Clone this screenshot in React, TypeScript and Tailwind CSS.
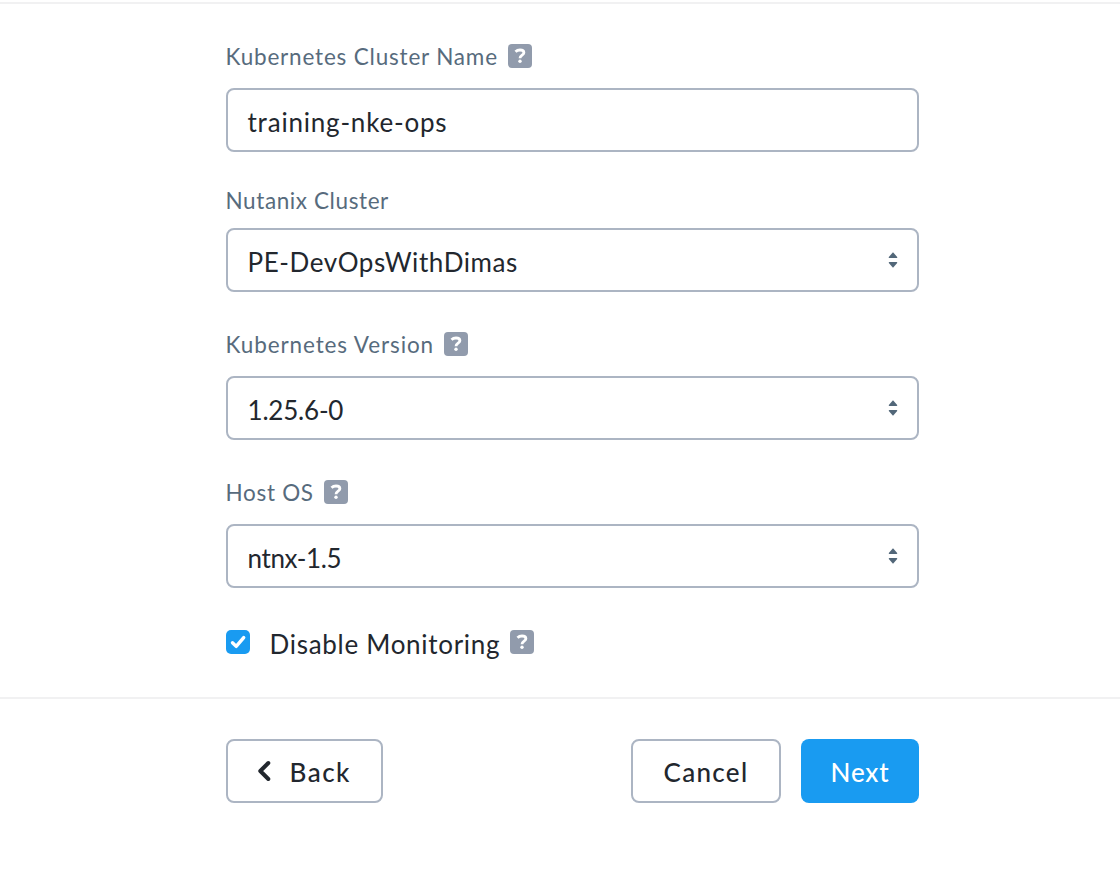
import { useState, type ReactNode } from "react";

function Help({ className = "" }: { className?: string }) {
  return (
    <button
      type="button"
      aria-label="Help"
      className={`flex size-6 shrink-0 items-center justify-center rounded-[4px] bg-[#919bac] text-white ${className}`}
    >
      <svg width="24" height="24" viewBox="0 0 24 24" fill="none">
        <path d="M7.5 7.8C8.8 6.5 10.3 6 12 6C14.4 6 15.9 7.1 15.9 8.8C15.9 11.2 12 11.3 12 14.2" stroke="currentColor" strokeWidth="2.8" />
        <circle cx="12" cy="17.3" r="1.7" fill="currentColor" />
      </svg>
    </button>
  );
}

function Sorter() {
  return (
    <svg width="10" height="16" viewBox="0 0 10 16" fill="#526779">
      <path d="M5 0.2L9.2 5Q9.5 6 8.6 6H1.4Q0.5 6 0.8 5Z" />
      <path d="M5 15.8L9.2 11Q9.5 10 8.6 10H1.4Q0.5 10 0.8 11Z" />
    </svg>
  );
}

function Label({ text, spacing, help = false }: { text: string; spacing: string; help?: boolean }) {
  return (
    <div className="flex h-6 items-center">
      <span className={`relative top-px -ml-[0.5px] whitespace-nowrap text-[22.5px] leading-6 text-[#576b7d] ${spacing}`}>{text}</span>
      {help && <Help className="ml-2.5" />}
    </div>
  );
}

function Box({ children, select = false }: { children: ReactNode; select?: boolean }) {
  return (
    <div className="flex h-16 items-center justify-between rounded-lg border-2 border-[#acb5c3] pr-[19px] pl-[19.5px] text-[26px] leading-8 text-[#22272e]">
      {children}
      {select && <Sorter />}
    </div>
  );
}

export default function App() {
  const [checked, setChecked] = useState(true);
  return (
    <div className="flex h-[872px] w-[1120px] flex-col overflow-hidden bg-white pt-0.5 font-['Lato',sans-serif]">
      <main className="h-[697px] border-y-2 border-[#f1f1f2] pt-10">
        <form className="ml-[226px] w-[693px]">
          <Label text="Kubernetes Cluster Name" spacing="tracking-[0.81px]" help />
          <div className="mt-5">
            <Box><span className="relative top-0.5 tracking-[0.8px]">training-nke-ops</span></Box>
          </div>
          <div className="mt-9">
            <Label text="Nutanix Cluster" spacing="tracking-[0.6px]" />
          </div>
          <div className="mt-4">
            <Box select><span className="relative top-0.5 tracking-[0.59px]">PE-DevOpsWithDimas</span></Box>
          </div>
          <div className="mt-10">
            <Label text="Kubernetes Version" spacing="tracking-[0.89px]" help />
          </div>
          <div className="mt-5">
            <Box select><span className="relative top-0.5 -tracking-[0.2px]">1.25.6-0</span></Box>
          </div>
          <div className="mt-10">
            <Label text="Host OS" spacing="tracking-[0.7px]" help />
          </div>
          <div className="mt-5">
            <Box select><span className="relative top-0.5 -tracking-[0.36px]">ntnx-1.5</span></Box>
          </div>
          <div className="mt-[42px] flex h-6 items-center">
            <button
              type="button"
              role="checkbox"
              aria-checked={checked}
              aria-label="Disable Monitoring"
              onClick={() => setChecked(!checked)}
              className="flex size-6 items-center justify-center rounded-[5px] bg-[#199bf1]"
            >
              {checked && (
                <svg width="24" height="24" viewBox="0 0 24 24" fill="none">
                  <path d="M6.5 12.8L10.2 16.4L17.7 7.6" stroke="white" strokeWidth="3.4" strokeLinecap="round" strokeLinejoin="round" />
                </svg>
              )}
            </button>
            <span className="relative top-0.5 ml-[19.5px] whitespace-nowrap text-[26px] leading-8 tracking-[0.71px] text-[#22272e]">Disable Monitoring</span>
            <Help className="ml-2.5" />
          </div>
        </form>
      </main>
      <footer className="mt-10 ml-[226px] flex h-16 w-[693px] text-[26px] leading-8 font-medium text-[#22272e]">
        <button type="button" className="flex w-[157px] items-center rounded-lg border-2 border-[#acb5c3] pl-[29px]">
          <svg width="14" height="22" viewBox="0 0 14 22" fill="none">
            <path d="M11.3 3L3.3 11L11.3 19" stroke="currentColor" strokeWidth="4" strokeLinecap="round" strokeLinejoin="round" />
          </svg>
          <span className="relative top-px ml-[18.5px] tracking-[1.5px]">Back</span>
        </button>
        <button type="button" className="ml-auto w-[150px] rounded-lg border-2 border-[#acb5c3]">
          <span className="relative top-px tracking-[1.3px]">Cancel</span>
        </button>
        <button type="button" className="ml-5 w-[118px] rounded-lg bg-[#199bf1] text-white">
          <span className="relative top-px tracking-[0.8px]">Next</span>
        </button>
      </footer>
    </div>
  );
}
